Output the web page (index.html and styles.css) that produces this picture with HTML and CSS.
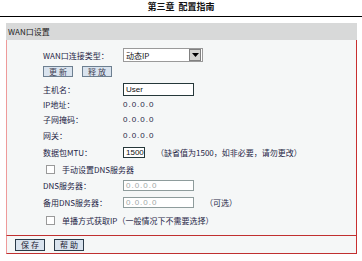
FILE: index.html
```html
<!DOCTYPE html>
<html>
<head>
<meta charset="utf-8">
<link rel="stylesheet" href="styles.css">
</head>
<body>
<div class="page-title">第三章&nbsp;&nbsp;配置指南</div>
<div class="panel">
  <div class="panel-head">WAN口设置</div>
  <div class="panel-body">
    <div class="row r1">
      <span class="lbl">WAN口连接类型：</span>
      <span class="select"><span class="sel-text">动态IP</span><span class="sel-btn"><svg width="7" height="4" viewBox="0 0 7 4"><path d="M0 0H7L3.5 4Z" fill="#000"/></svg></span></span>
    </div>
    <div class="row r2">
      <span class="btn">更&nbsp;新</span><span class="btn">释&nbsp;放</span>
    </div>
    <div class="row r3">
      <span class="lbl">主机名：</span>
      <span class="input w70">User</span>
    </div>
    <div class="row r4">
      <span class="lbl">IP地址：</span><span class="val">0.0.0.0</span>
    </div>
    <div class="row r5">
      <span class="lbl">子网掩码：</span><span class="val">0.0.0.0</span>
    </div>
    <div class="row r6">
      <span class="lbl">网关：</span><span class="val">0.0.0.0</span>
    </div>
    <div class="row r7">
      <span class="lbl">数据包MTU：</span>
      <span class="input w20">1500</span>
      <span class="note">（缺省值为1500，如非必要，请勿更改）</span>
    </div>
    <div class="row r8 chk-row">
      <span class="chk"></span><span>手动设置DNS服务器</span>
    </div>
    <div class="row r9">
      <span class="lbl">DNS服务器：</span>
      <span class="input w69 dis">0.0.0.0</span>
    </div>
    <div class="row r10">
      <span class="lbl">备用DNS服务器：</span>
      <span class="input w69 dis">0.0.0.0</span>
      <span class="note">（可选）</span>
    </div>
    <div class="row r11 chk-row">
      <span class="chk"></span><span>单播方式获取IP（一般情况下不需要选择）</span>
    </div>
  </div>
  <div class="panel-foot">
    <span class="btn fbtn">保&nbsp;存</span><span class="btn fbtn">帮&nbsp;助</span>
  </div>
</div>
</body>
</html>
```

FILE: styles.css
```css
html, body {
  margin: 0;
  padding: 0;
  background: #ffffff;
}
body {
  width: 362px;
  height: 261px;
  overflow: hidden;
  font-family: "Noto Sans CJK SC", "Liberation Sans", sans-serif;
  font-size: 8px;
  color: #1e1e46;
}
.page-title {
  height: 16px;
  line-height: 14px;
  text-align: center;
  font-size: 9px;
  font-weight: bold;
  color: #111;
  border-bottom: 1px solid #000;
}
.panel {
  margin: 6px 0 0 6px;
  width: 351px;
}
.panel-head {
  height: 17px;
  line-height: 17px;
  background: #d8d9d9;
  padding-left: 2px;
  color: #222;
}
.panel-body {
  background: #f5f7f7;
  border-left: 1px solid #ee9a9a;
  border-right: 1px solid #c83030;
  border-bottom: 1px solid #c03030;
  padding: 7px 0 6px 36px;
  display: flex;
  flex-direction: column;
}
.row {
  display: flex;
  align-items: center;
}
.r1 { height: 16px; }
.r2 { height: 17px; }
.r3 { height: 18px; }
.r4 { height: 13px; }
.r5 { height: 17px; }
.r6 { height: 15px; }
.r7 { height: 18px; }
.r8 { height: 17px; }
.r9 { height: 15px; }
.r10 { height: 18px; }
.r11 { height: 18px; }
.lbl {
  width: 80px;
  flex: none;
}
.val {
  letter-spacing: 1px;
  font-family: "Liberation Sans", sans-serif;
}
.select {
  width: 78px;
  height: 12px;
  border: 1px solid #9a9a9a;
  background: #fff;
  display: flex;
  align-items: center;
}
.sel-text {
  flex: 1;
  padding-left: 2px;
  color: #111;
}
.sel-btn {
  width: 10px;
  height: 10px;
  margin-right: 1px;
  background: #d4d4d0;
  border: 1px solid #808080;
  display: flex;
  align-items: center;
  justify-content: center;
}
.btn {
  display: inline-flex;
  align-items: center;
  justify-content: center;
  width: 28px;
  height: 9px;
  background: #d9e3ee;
  border: 1px solid #6d7f90;
  color: #445;
  margin-right: 9px;
  line-height: 9px;
}
.input {
  height: 11px;
  background: #fff;
  border: 1px solid #26383a;
  display: flex;
  align-items: center;
  padding-left: 2px;
  color: #111;
  font-family: "Liberation Sans", sans-serif;
}
.w70 { width: 67px; height: 11px; }
.w20 { width: 18px; height: 9px; }
.w69 { width: 67px; height: 9px; }
.dis {
  border-color: #8e9c9c;
  color: #a0a8a8;
  letter-spacing: 1px;
}
.note {
  margin-left: 11px;
}
.chk-row {
  padding-left: 3px;
}
.chk {
  width: 7px;
  height: 7px;
  border: 1px solid #9a9a9a;
  background: #fff;
  margin-right: 7px;
}
.panel-foot {
  height: 17px;
  background: #f5f7f7;
  border-left: 1px solid #ee9a9a;
  border-right: 1px solid #c83030;
  border-bottom: 1px solid #c03030;
  display: flex;
  align-items: center;
  padding-left: 8px;
}
.fbtn {
  width: 28px;
  height: 10px;
  border-color: #2a3a48;
  color: #223;
}
```
